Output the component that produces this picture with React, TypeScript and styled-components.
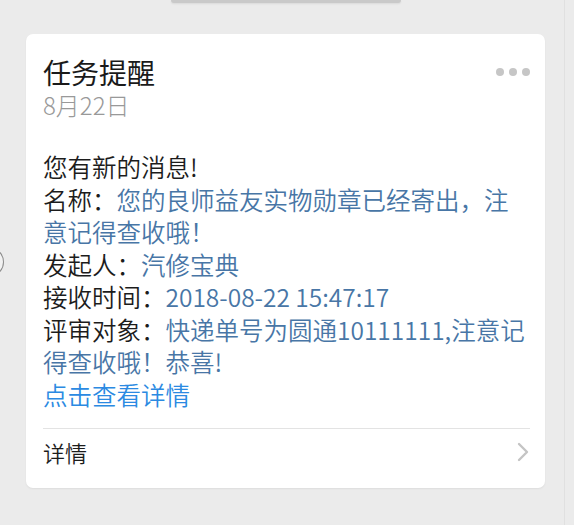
import React from "react";
import styled, { createGlobalStyle } from "styled-components";

const Global = createGlobalStyle`
  html, body { margin: 0; padding: 0; background: #ebebeb; }
  body {
    font-family: "Noto Sans CJK SC", "Noto Sans", sans-serif;
    -webkit-font-smoothing: antialiased;
  }
`;

const Page = styled.div`
  position: relative;
  width: 574px;
  height: 525px;
  overflow: hidden;
  background: #ebebeb;
`;

const TopPill = styled.div`
  width: 230px;
  height: 3px;
  margin: 0 0 0 171px;
  background: #c9c9c9;
  border-radius: 0 0 6px 6px;
  box-shadow: 0 1px 2px rgba(0, 0, 0, 0.08);
`;

const EdgeBubble = styled.div`
  position: absolute;
  left: -22px;
  top: 248px;
  width: 24px;
  height: 26px;
  border-radius: 50%;
  border: 1.5px solid #8a8a8a;
  background: #f2f2f2;
`;

const RightStrip = styled.div`
  position: absolute;
  right: 9px;
  top: 0;
  bottom: 0;
  width: 1px;
  background: #e0e0e0;
`;

const Card = styled.div`
  width: 519px;
  margin: 31px 0 0 26px;
  background: #ffffff;
  border-radius: 7px;
  box-shadow: 0 1px 2px rgba(0, 0, 0, 0.06);
  padding: 20px 15px 0 17px;
  box-sizing: border-box;
`;

const Header = styled.div`
  display: flex;
  justify-content: space-between;
  align-items: flex-start;
`;

const HeaderText = styled.div`
  display: flex;
  flex-direction: column;
`;

const Title = styled.div`
  font-size: 28px;
  line-height: 36px;
  font-weight: 400;
  color: #1a1a1a;
`;

const DateText = styled.div`
  font-size: 24px;
  line-height: 30px;
  font-weight: 300;
  color: #999999;
`;

const Dots = styled.div`
  display: flex;
  gap: 5px;
  margin-top: 14px;
`;

const Dot = styled.span`
  width: 8px;
  height: 8px;
  border-radius: 50%;
  background: #c6c6c6;
`;

const Body = styled.div`
  margin-top: 31px;
  width: 486px;
  font-size: 24.5px;
  line-height: 32.5px;
  font-weight: 350;
  color: #1c1c1c;
`;

const Line = styled.div``;

const Value = styled.span`
  color: #4876a6;
`;

const Link = styled.div`
  color: #2b8ae2;
`;

const Divider = styled.div`
  height: 1px;
  background: #e3e3e3;
  margin-top: 17px;
`;

const Footer = styled.div`
  display: flex;
  align-items: center;
  justify-content: space-between;
  height: 46px;
  padding-bottom: 13px;
  font-size: 22px;
  font-weight: 350;
  color: #1c1c1c;
`;

const Chevron = () => (
  <svg width="14" height="22" viewBox="0 0 14 22" fill="none">
    <path d="M3 3 L11 11 L3 19" stroke="#c4c4c4" strokeWidth="2.4" strokeLinecap="round" strokeLinejoin="round" />
  </svg>
);

export default function App() {
  return (
    <Page>
      <Global />
      <TopPill />
      <EdgeBubble />
      <RightStrip />
      <Card>
        <Header>
          <HeaderText>
            <Title>任务提醒</Title>
            <DateText>8月22日</DateText>
          </HeaderText>
          <Dots>
            <Dot />
            <Dot />
            <Dot />
          </Dots>
        </Header>
        <Body>
          <Line>您有新的消息!</Line>
          <Line>
            名称：<Value>您的良师益友实物勋章已经寄出，注意记得查收哦！</Value>
          </Line>
          <Line>
            发起人：<Value>汽修宝典</Value>
          </Line>
          <Line>
            接收时间：<Value>2018-08-22 15:47:17</Value>
          </Line>
          <Line>
            评审对象：<Value>快递单号为圆通10111111,注意记得查收哦！恭喜!</Value>
          </Line>
          <Link>点击查看详情</Link>
        </Body>
        <Divider />
        <Footer>
          <span>详情</span>
          <Chevron />
        </Footer>
      </Card>
    </Page>
  );
}
